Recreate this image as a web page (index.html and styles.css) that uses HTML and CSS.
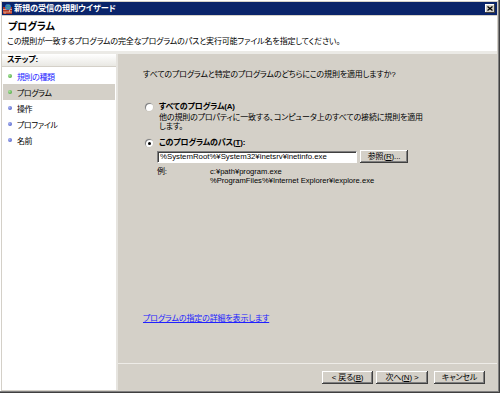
FILE: index.html
```html
<!DOCTYPE html>
<html lang="ja">
<head>
<meta charset="utf-8">
<title>新規の受信の規則ウイザード</title>
<link rel="stylesheet" href="styles.css">
</head>
<body>
<div class="window">
  <div class="titlebar">
    <svg class="ticon" width="9" height="10" viewBox="0 0 9 10">
      <rect x="0" y="3" width="9" height="7" fill="#b3341f"/>
      <path d="M0 5.5H9M0 8H9M3 3V5.5M6.5 5.5V8M2 8V10M7 3V5.5" stroke="#e8b8a0" stroke-width="0.8" fill="none"/>
      <circle cx="5" cy="3" r="3" fill="#2f6fc8"/>
      <path d="M3.5 1.2C4.5 2 5.8 2.2 6.8 1.6M3 3.6C4.2 4.3 6 4.3 7.3 3.5" stroke="#5fc060" stroke-width="0.9" fill="none"/>
    </svg>
    <span class="ttext">新規の受信の規則ウイザード</span>
    <span class="close"><svg width="6" height="5" viewBox="0 0 6 5"><path d="M0.5 0.5L5.5 4.5M5.5 0.5L0.5 4.5" stroke="#000" stroke-width="1.3"/></svg></span>
  </div>
  <div class="header">
    <div class="h-title">プログラム</div>
    <div class="h-desc">この規則が一致するプログラムの完全なプログラムのパスと実行可能ファイル名を指定してください。</div>
  </div>
  <div class="body">
    <div class="steps">
      <div class="steps-head">ステップ:</div>
      <ul class="step-list">
        <li class="step"><span class="dot green"></span><span class="step-link">規則の種類</span></li>
        <li class="step current"><span class="dot green"></span>プログラム</li>
        <li class="step"><span class="dot blue"></span>操作</li>
        <li class="step"><span class="dot blue"></span>プロファイル</li>
        <li class="step"><span class="dot blue"></span>名前</li>
      </ul>
    </div>
    <div class="main">
      <div class="content">
        <p class="question">すべてのプログラムと特定のプログラムのどちらにこの規則を適用しますか?</p>
        <div class="option first">
          <span class="radio"></span>
          <div class="opt-body">
            <div class="opt-label">すべてのプログラム(A)</div>
            <div class="opt-desc">他の規則のプロパティに一致する、コンピュータ上のすべての接続に規則を適用<br>します。</div>
          </div>
        </div>
        <div class="option second">
          <span class="radio checked"></span>
          <div class="opt-body">
            <div class="opt-label">このプログラムのパス(<u>T</u>):</div>
          </div>
        </div>
        <div class="path-row">
          <div class="input">%SystemRoot%¥System32¥inetsrv¥inetinfo.exe</div>
          <span class="btn browse">参照(<u>R</u>)...</span>
        </div>
        <div class="example">
          <span class="ex-label">例:</span>
          <div class="ex-paths">
            <div>c:¥path¥program.exe</div>
            <div>%ProgramFiles%¥Internet Explorer¥iexplore.exe</div>
          </div>
        </div>
        <a class="more" href="#">プログラムの指定の詳細を表示します</a>
      </div>
      <div class="footer">
        <span class="btn nav back">&lt; 戻る(<u>B</u>)</span>
        <span class="btn nav next">次へ(<u>N</u>) &gt;</span>
        <span class="btn nav cancel">キャンセル</span>
      </div>
    </div>
  </div>
</div>
</body>
</html>
```

FILE: styles.css
```css
* { box-sizing: border-box; }
html, body { margin: 0; padding: 0; }
body {
  width: 500px;
  height: 393px;
  overflow: hidden;
  font-family: "Liberation Sans", "Noto Sans CJK JP", sans-serif;
  font-size: 8px;
  letter-spacing: -0.15px;
  font-feature-settings: "palt";
  color: #000;
}
.window {
  width: 500px;
  height: 393px;
  display: flex;
  flex-direction: column;
  background: #d4d0c8;
  padding: 2px 3px 3px 2px;
  box-shadow: inset -1px -1px #404040, inset -2px -2px #808080, inset 1px 1px #fff;
}
.titlebar {
  height: 13px;
  flex: none;
  background: #0a246a;
  display: flex;
  align-items: center;
  padding: 0 2px 0 1px;
  color: #fff;
}
.ticon { flex: none; margin-right: 2px; }
.ttext {
  font-weight: bold;
  font-size: 8.2px;
  line-height: 13px;
  flex: 1;
}
.close {
  width: 10px;
  height: 9px;
  background: #d4d0c8;
  box-shadow: inset -1px -1px #404040, inset 1px 1px #fff;
  display: flex;
  align-items: center;
  justify-content: center;
}
.header {
  margin-top: 1px;
  height: 38px;
  flex: none;
  background: #fff;
  padding: 5px 0 0 5px;
  border-bottom: 3px solid #ebeae6;
}
.h-title {
  font-weight: bold;
  font-size: 10px;
  line-height: 12px;
  letter-spacing: 0;
  padding-left: 1px;
}
.h-desc {
  margin-top: 4px;
  line-height: 10px;
}
.body {
  flex: 1;
  display: flex;
  min-height: 0;
}
.steps {
  width: 116px;
  flex: none;
  background: #fff;
  border-right: 2px solid #e6e4df;
}
.steps-head {
  height: 13px;
  line-height: 12px;
  font-weight: bold;
  padding-left: 5px;
  background: linear-gradient(#ffffff, #e9e8e3);
  border-bottom: 1px solid #d4d0c8;
}
.step-list {
  list-style: none;
  margin: 0;
  padding: 1px 1px 0 1px;
}
.step {
  height: 16px;
  display: flex;
  align-items: center;
  padding-left: 5px;
  letter-spacing: -0.4px;
}
.step.current { background: #d4d0c8; }
.dot {
  width: 4px;
  height: 4px;
  border-radius: 50%;
  margin-right: 5px;
  flex: none;
}
.dot.green { background: radial-gradient(circle at 35% 35%, #a8e59a, #3a9a2e); }
.dot.blue { background: radial-gradient(circle at 35% 35%, #a9b4f2, #3f4fc0); }
.step-link { color: #1a1aff; }
.main {
  flex: 1;
  display: flex;
  flex-direction: column;
}
.content {
  flex: 1;
  display: flex;
  flex-direction: column;
  padding: 16px 0 39px 25px;
}
.question {
  margin: 0;
  line-height: 10px;
}
.option {
  display: flex;
  align-items: flex-start;
}
.option.first { margin-top: 22px; }
.option.second { margin-top: 7px; }
.radio {
  width: 8px;
  height: 8px;
  border-radius: 50%;
  background: #fff;
  margin: 1px 6px 0 2px;
  flex: none;
  box-shadow: inset 1px 1px #808080, 0 0 0 0.5px #c8c4bc;
  display: flex;
  align-items: center;
  justify-content: center;
}
.radio.checked::after {
  content: "";
  width: 3px;
  height: 3px;
  border-radius: 50%;
  background: #000;
}
.opt-label {
  font-weight: bold;
  line-height: 10px;
}
.opt-desc {
  margin-top: 1px;
  line-height: 9px;
}
.path-row {
  margin-top: 2px;
  padding-left: 14px;
  display: flex;
  align-items: center;
}
.input {
  width: 200px;
  height: 12px;
  background: #fff;
  border: 1px solid;
  border-color: #808080 #fff #fff #808080;
  box-shadow: inset 1px 1px #404040;
  font-size: 7.8px;
  letter-spacing: 0;
  line-height: 10px;
  padding-left: 2px;
  white-space: nowrap;
  overflow: hidden;
}
.btn {
  display: flex;
  align-items: center;
  justify-content: center;
  height: 13px;
  background: #d4d0c8;
  box-shadow: inset -1px -1px #404040, inset 1px 1px #fff, inset -2px -2px #808080;
  line-height: 10px;
  white-space: nowrap;
}
.browse {
  width: 48px;
  margin-left: 3px;
}
.example {
  margin-top: 5px;
  padding-left: 14px;
  display: flex;
  line-height: 8.5px;
}
.ex-label { width: 53px; flex: none; }
.ex-paths { font-size: 7.6px; letter-spacing: 0; }
.more {
  margin-top: auto;
  color: #2020ff;
  text-decoration: underline;
  line-height: 10px;
  align-self: flex-start;
}
.footer {
  height: 27px;
  flex: none;
  border-top: 1px solid #eeece8;
  display: flex;
  align-items: flex-start;
  justify-content: flex-end;
  padding: 7px 12px 0 0;
}
.nav { width: 51px; }
.next { width: 52px; margin-left: 3px; }
.cancel { margin-left: 6px; }
```
